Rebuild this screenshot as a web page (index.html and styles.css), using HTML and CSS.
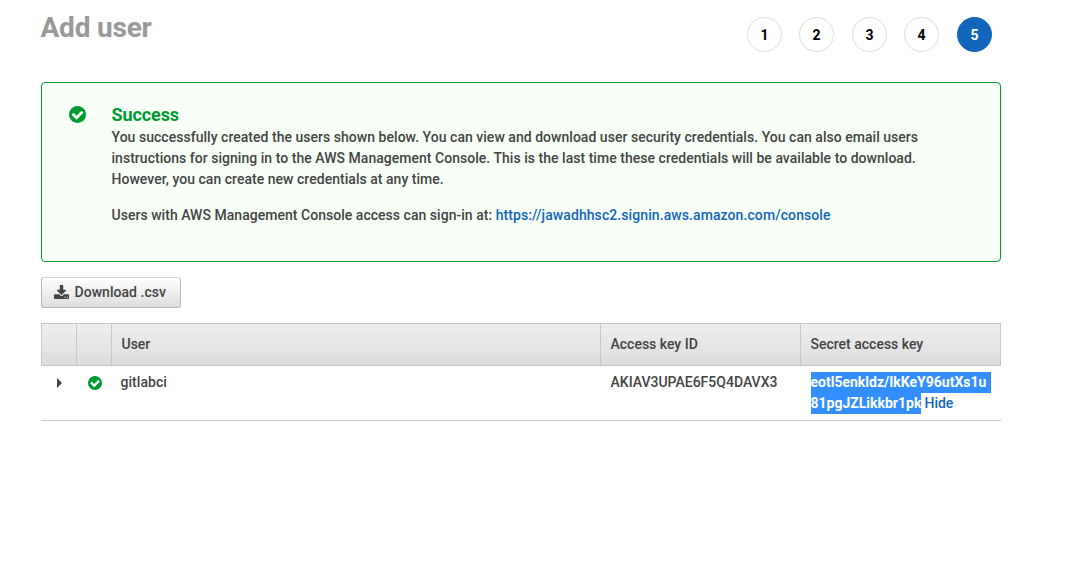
FILE: index.html
```html
<!DOCTYPE html>
<html lang="en">
<head>
<meta charset="utf-8">
<title>Add user</title>
<link rel="stylesheet" href="styles.css">
</head>
<body>
<svg class="defs" width="0" height="0">
  <symbol id="check" viewBox="0 0 1536 1536"><path d="M1284 606q0-28-18-46l-91-90q-19-19-45-19t-45 19L677 877 451 651q-19-19-45-19t-45 19l-91 90q-18 18-18 46 0 27 18 45l362 362q19 19 45 19 27 0 46-19l543-543q18-18 18-45zM1536 768q0 209-103 385.500T1153.500 1433 768 1536t-385.500-103T103 1153.500 0 768t103-385.500T382.500 103 768 0t385.500 103T1433 382.500 1536 768z"/></symbol>
</svg>
<main class="page">
  <header class="top">
    <h1 class="title">Add user</h1>
    <ol class="steps">
      <li class="step">1</li><li class="step">2</li><li class="step">3</li><li class="step">4</li><li class="step current">5</li>
    </ol>
  </header>
  <section class="alert">
    <svg class="alert-icon"><use href="#check"/></svg>
    <div class="alert-body">
      <h2 class="alert-title">Success</h2>
      <p class="alert-text">You successfully created the users shown below. You can view and download user security credentials. You can also email users instructions for signing in to the AWS Management Console. This is the last time these credentials will be available to download. However, you can create new credentials at any time.</p>
      <p class="alert-text">Users with AWS Management Console access can sign-in at: <a class="link">https://jawadhhsc2.signin.aws.amazon.com/console</a></p>
    </div>
  </section>
  <button class="download">
    <svg class="download-icon" viewBox="0 0 1664 1536"><path d="M1280 1216q0-26-19-45t-45-19-45 19-19 45 19 45 45 19 45-19 19-45zm256 0q0-26-19-45t-45-19-45 19-19 45 19 45 45 19 45-19 19-45zm128-224v320q0 40-28 68t-68 28H96q-40 0-68-28t-28-68V992q0-40 28-68t68-28h465l135 136q58 56 136 56t136-56l136-136h464q40 0 68 28t28 68zm-325-569q17 41-14 70L877 941q-18 19-45 19t-45-19L339 493q-31-29-14-70 17-39 59-39h256V-64q0-26 19-45t45-19h256q26 0 45 19t19 45v448h256q42 0 59 39z" transform="translate(0 128)"/></svg>
    <span>Download .csv</span>
  </button>
  <section class="table">
    <div class="row head">
      <div class="cell"></div><div class="cell"></div><div class="cell">User</div><div class="cell">Access key ID</div><div class="cell">Secret access key</div>
    </div>
    <div class="row body">
      <div class="cell icon-cell"><svg class="caret" viewBox="0 0 5 10"><path d="M0 0L5 5L0 10z"/></svg></div>
      <div class="cell icon-cell"><svg class="ok"><use href="#check"/></svg></div>
      <div class="cell name">gitlabci</div>
      <div class="cell">AKIAV3UPAE6F5Q4DAVX3</div>
      <div class="cell secret"><span class="selected wide">eotl5enkldz/IkKeY96utXs1u</span><span class="selected">81pgJZLikkbr1pk</span> <a class="link">Hide</a></div>
    </div>
  </section>
</main>
</body>
</html>
```
FILE: styles.css
```css
* { box-sizing: border-box; }
body { margin: 0; background: #fff; color: #444; font: 500 14px/21px Roboto, sans-serif; }
h1, h2, p, ol { margin: 0; padding: 0; }
.defs { display: block; height: 0; }
.page { width: 960px; margin-left: 41px; }
.top { display: flex; justify-content: space-between; height: 82px; padding-right: 9px; }
.title { margin-left: -0.5px; padding-top: 11px; font-size: 28px; line-height: 33px; font-weight: 700; letter-spacing: -0.2px; color: #999; }
.steps { display: flex; gap: 17.5px; padding-top: 17px; list-style: none; }
.step { width: 35px; height: 35px; border: 1px solid #ddd; border-radius: 50%; line-height: 34px; text-align: center; font-weight: 700; color: #000; }
.step:nth-child(even) { margin-left: -0.5px; margin-right: 0.5px; }
.step.current { background: #1166bb; border-color: #1166bb; color: #fff; }
.alert { display: flex; height: 180px; padding: 20px 60px 0 27px; border: 1px solid #093; border-radius: 4px; background: #f7fff7; }
.alert-icon { flex: none; width: 17px; height: 17px; margin: 2.5px 25.5px 0 0; fill: #093; }
.alert-title { margin-bottom: 1px; font-size: 18px; line-height: 23px; font-weight: 700; letter-spacing: -0.1px; color: #093; }
.alert-text { width: 830px; margin-bottom: 15px; letter-spacing: 0.03px; }
.link { color: #1166bb; }
.alert .link { letter-spacing: 0.085px; }
.download { display: flex; align-items: center; width: 140px; height: 31px; margin: 15px 0; padding: 0 0 1px 11.5px; gap: 6px; border: 1px solid #b8b8b8; border-top-color: #d4d4d4; border-radius: 3px; background: linear-gradient(#fff, #ddd); color: #444; font: inherit; letter-spacing: 0.03px; }
.download-icon { width: 15px; height: 14px; fill: #444; }
.row { display: grid; grid-template-columns: 35px 35px 489px 200px 201px; }
.head { height: 43px; border: 1px solid #c8c8c8; background: linear-gradient(#eee, #ddd); grid-template-columns: 35px 35px 489px 200px 199px; }
.head .cell { padding: 10px 0 0 9.5px; border-right: 1px solid #c8c8c8; }
.head .cell:last-child { border-right: 0; }
.body { height: 55px; border-bottom: 1px solid #c8c8c8; }
.body .cell { padding: 6px 0 0 10.5px; }
.body .secret { padding-left: 11px; }
.body .name { padding-left: 9.5px; letter-spacing: 0.05px; }
.body .icon-cell { display: flex; justify-content: center; padding: 10px 0 0 2px; }
.caret { width: 5px; height: 10px; margin-top: 2px; fill: #444; }
.ok { width: 14px; height: 14px; fill: #093; }
.selected { display: inline-block; height: 21px; background: #338fff; color: #fff; font-weight: 700; text-indent: -0.5px; }
.wide { width: 180px; }
.selected:not(.wide) { width: 110px; }
```
